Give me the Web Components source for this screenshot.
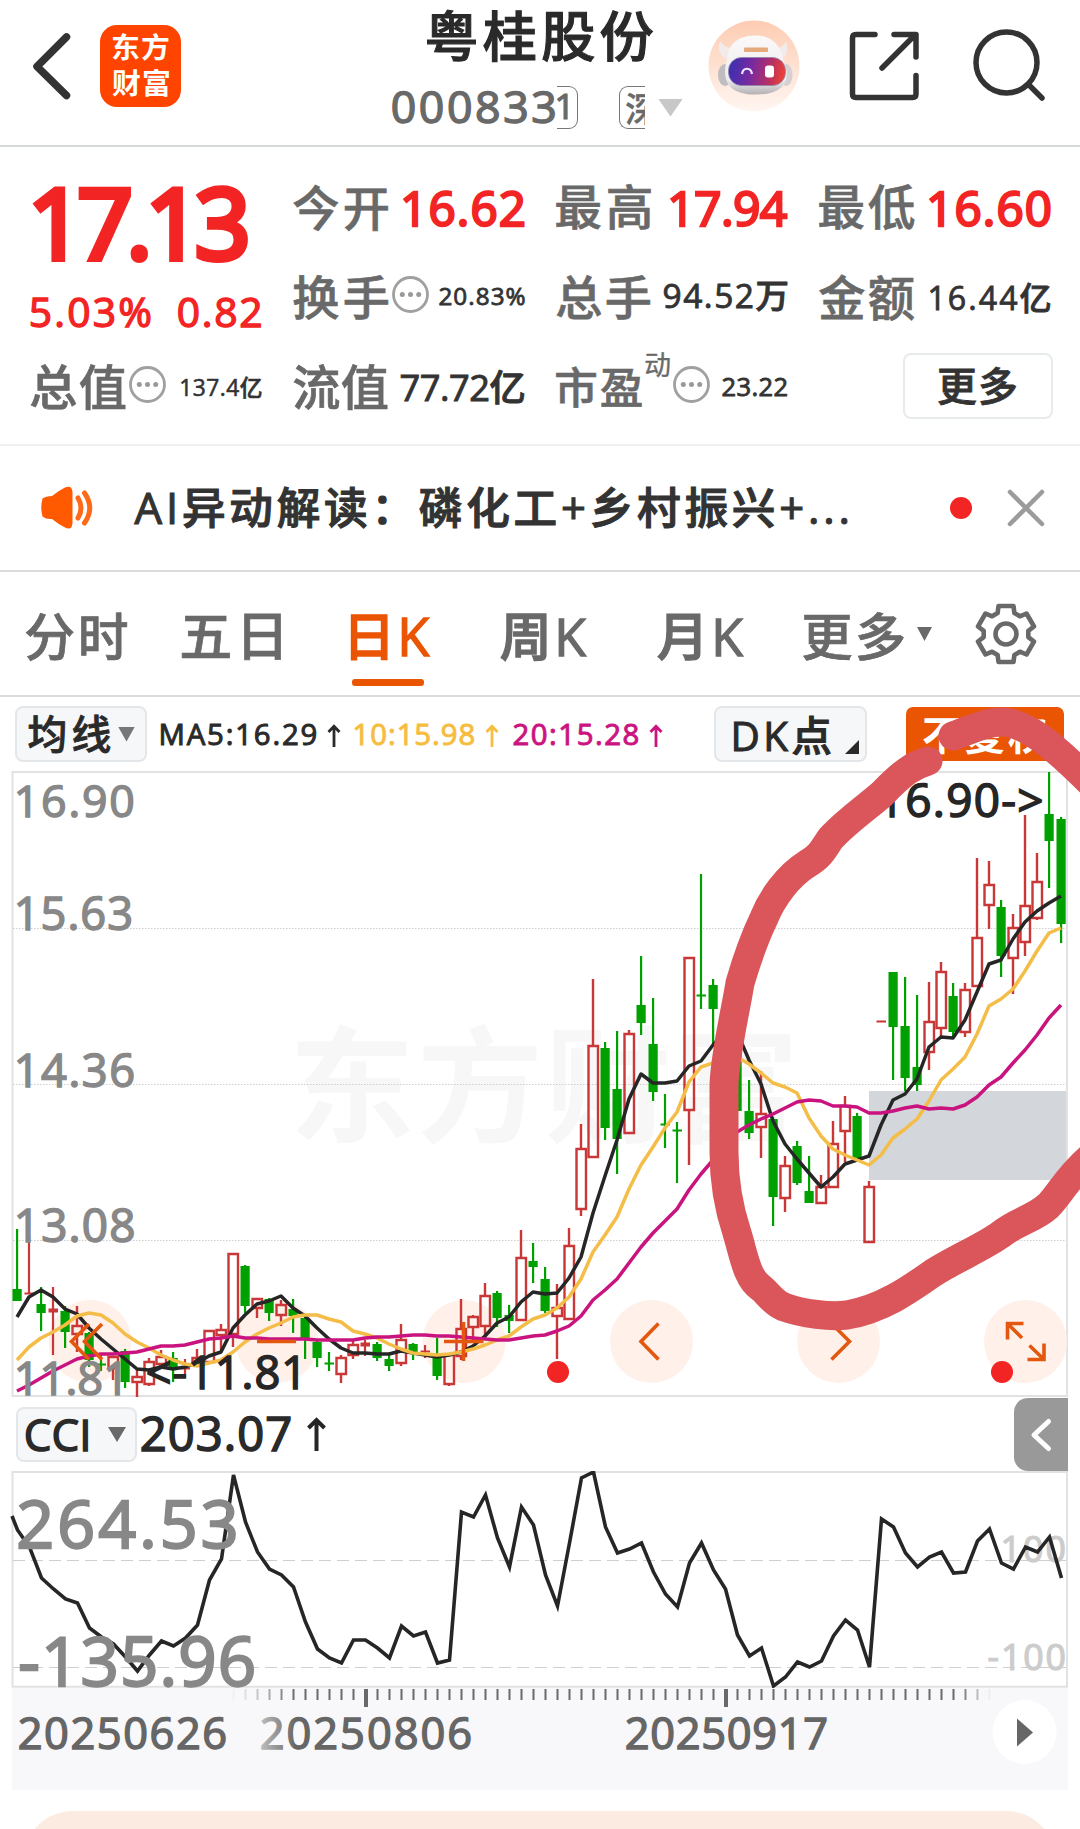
<!DOCTYPE html>
<html lang="zh-CN">
<head>
<meta charset="utf-8">
<title>粤桂股份 000833</title>
<style>
    body {
        margin: 0;
        width: 1080px;
        height: 1829px;
        overflow: hidden;
        background: #fff;
        color: #2a2a2a;
        font-family: "Open Sans", "Noto Sans CJK SC", sans-serif;
    }
</style>
</head>
<body>
<stock-page></stock-page>

<script>
const FONT = '"Open Sans", "Noto Sans CJK SC", sans-serif';
const measureCtx = document.createElement('canvas').getContext('2d');

// Extra outline in em: the Latin digits are lighter than the Chinese glyphs
function outlineFor(text, weight) {
    if (weight >= 700) return 0;
    if (!/[\u4e00-\u9fff]/.test(text)) return 0.034;
    return /[0-9A-Z]/.test(text) ? 0.026 : 0.014;
}

// Font size, tracking and offsets that make the ink of a text fill a w x h box
function fitInk(text, w, h, weight, heavy) {
    measureCtx.font = `${weight} 100px ${FONT}`;
    let m = measureCtx.measureText(text);
    const size = 100 * h / (m.actualBoundingBoxAscent + m.actualBoundingBoxDescent + 100 * heavy);
    const stroke = size * heavy;
    measureCtx.font = `${weight} ${size}px ${FONT}`;
    m = measureCtx.measureText(text);
    const ink = m.actualBoundingBoxLeft + m.actualBoundingBoxRight + stroke;
    const n = [...text].length;
    return {
        size,
        stroke,
        spacing: n > 1 ? (w - ink) / (n - 1) : 0,
        left: m.actualBoundingBoxLeft + stroke / 2,
        ascent: m.actualBoundingBoxAscent + stroke / 2,
        fontAscent: m.fontBoundingBoxAscent,
        fontDescent: m.fontBoundingBoxDescent,
    };
}

function svgText(text, x, y, w, h, color, weight = 500) {
    const f = fitInk(text, w, h, weight, outlineFor(text, weight));
    const safe = text.replace('<', '&lt;').replace('>', '&gt;');
    return `<text x="${x + f.left}" y="${y + f.ascent}" fill="${color}" stroke="${color}" stroke-width="${f.stroke}" font-size="${f.size}" font-weight="${weight}" style="letter-spacing:${f.spacing}px">${safe}</text>`;
}

function points(ys, x0 = 17, step = 12) {
    return ys.map((y, i) => `${x0 + i * step},${y}`).join(' ');
}

class BaseElement extends HTMLElement {
    connectedCallback() {
        if (this.shadowRoot) return;
        this.attachShadow({ mode: 'open' });
        this.shadowRoot.innerHTML = this.template();
    }
}

class FitText extends BaseElement {
    template() {
        const text = this.getAttribute('text');
        const w = +this.getAttribute('w');
        const h = +this.getAttribute('h');
        const weight = this.getAttribute('weight') || 500;
        const heavy = this.hasAttribute('heavy') ? +this.getAttribute('heavy') : outlineFor(text, weight);
        const f = fitInk(text, w, h, weight, heavy);
        const baseline = (h - f.fontAscent - f.fontDescent) / 2 + f.fontAscent;
        return `
            <style>
                :host { display: block; flex: none; width: ${w}px; height: ${h}px; }
                span {
                    display: block;
                    white-space: pre;
                    font: ${weight} ${f.size}px/${h}px ${FONT};
                    letter-spacing: ${f.spacing}px;
                    -webkit-text-stroke: ${f.stroke}px currentColor;
                    transform: translate(${f.left}px, ${f.ascent - baseline}px);
                }
            </style>
            <span>${text}</span>
        `;
    }
}

class TriangleMark extends BaseElement {
    template() {
        const w = this.getAttribute('w');
        const h = this.getAttribute('h');
        return `
            <style>
                :host { display: block; flex: none; width: ${w}px; height: ${h}px; background: currentColor; clip-path: polygon(0 0, 100% 0, 50% 100%); }
            </style>
        `;
    }
}

class MoreDots extends BaseElement {
    template() {
        return `
            <style>
                :host { display: block; flex: none; width: 37px; height: 37px; }
                svg { display: block; }
            </style>
            <svg width="37" height="37" viewBox="0 0 37 37">
                <circle cx="18.5" cy="18.5" r="17" fill="none" stroke="#a0a0a0" stroke-width="2.8"/>
                <g fill="#999"><circle cx="10.3" cy="18.5" r="2.5"/><circle cx="18.5" cy="18.5" r="2.5"/><circle cx="26.7" cy="18.5" r="2.5"/></g>
            </svg>
        `;
    }
}

class RobotAvatar extends BaseElement {
    template() {
        return `
            <style>
                :host { display: block; flex: none; width: 92px; height: 92px; }
                svg { display: block; }
            </style>
            <svg width="92" height="92" viewBox="0 0 92 92">
                <defs>
                    <linearGradient id="bg" x1="0" y1="0" x2="0" y2="1"><stop offset="0" stop-color="#fdccb2"/><stop offset="1" stop-color="#fff6f1"/></linearGradient>
                    <linearGradient id="visor" x1="0" y1="0" x2="1" y2="0.1"><stop offset="0" stop-color="#3330b4"/><stop offset="0.45" stop-color="#7b2a9e"/><stop offset="0.8" stop-color="#bb315f"/><stop offset="1" stop-color="#e8403a"/></linearGradient>
                    <linearGradient id="head" x1="0" y1="0" x2="0" y2="1"><stop offset="0" stop-color="#fbf9f9"/><stop offset="0.75" stop-color="#eeecee"/><stop offset="1" stop-color="#b4b0b5"/></linearGradient>
                </defs>
                <circle cx="46" cy="46" r="45.500" fill="url(#bg)"/>
                <path d="M12 21C9 30 12 37 20 39L29 29C21 29 15 26 12 21ZM78 21C81 30 79 37 72 39L64 29C71 29 76 26 78 21Z" fill="#f3ebea"/>
                <ellipse cx="17" cy="55" rx="7" ry="11" fill="#c0bcbf"/>
                <ellipse cx="78" cy="55" rx="6.500" ry="11" fill="#d5d0d3"/>
                <path d="M46 15.500C63 15 73 25 75 39C83 57 80 74.500 48 74.500C17 74.500 14 57 19 39C20 25 29 16 46 15.500Z" fill="url(#head)"/>
                <rect x="36" y="27.500" width="24" height="4.500" rx="1" fill="#e4aa7c"/>
                <rect x="20.500" y="37.500" width="57" height="28" rx="13" fill="url(#visor)" stroke="#8e86a8" stroke-width="0.800"/>
                <path d="M34 54C35 47 43 47 44 54" fill="none" stroke="#eee8ff" stroke-width="2.200"/>
                <rect x="57" y="45.500" width="9" height="12" rx="3" fill="#fff"/>
            </svg>
        `;
    }
}

class AppHeader extends BaseElement {
    template() {
        return `
            <style>
                :host { display: flex; align-items: flex-start; box-sizing: border-box; height: 147px; border-bottom: 2px solid #d5dad9; padding-left: 30px; }
                svg { display: block; flex: none; }
                .back { margin-top: 30px; }
                .logo {
                    display: flex; flex-direction: column; align-items: center; gap: 7px;
                    box-sizing: border-box; width: 81px; height: 82px; margin: 25px 0 0 28px; padding-top: 8px;
                    border-radius: 17px; background: #ff4400; color: #fff;
                }
                .name { margin: 10px 0 0 211px; width: 291px; }
                .name > fit-text { margin-left: 35px; }
                .code { display: flex; align-items: center; height: 43px; margin-top: 23px; color: #696969; }
                .tag { display: flex; align-items: center; box-sizing: border-box; height: 43px; border: 1px solid #777; overflow: hidden; }
                .tag.end { width: 21px; margin-left: 2px; border-left: 0; border-radius: 0 9px 9px 0; }
                .tag.start { width: 26px; margin-left: 41px; padding-left: 6px; border-right: 0; border-radius: 9px 0 0 9px; }
                triangle-mark { color: #c8c8c8; margin-left: 13px; }
                robot-avatar { margin: 20px 0 0 25px; }
                .share { margin: 29px 0 0 47px; }
                .search { margin: 26px 0 0 49px; }
            </style>
            <svg class="back" width="42" height="72" viewBox="0 0 42 72" fill="none" stroke="#333" stroke-width="7.500" stroke-linecap="round" stroke-linejoin="round"><path d="M36.500 7 7 36.500 36.500 65.500"/></svg>
            <div class="logo">
                <fit-text text="东方" w="57" h="28" weight="700"></fit-text>
                <fit-text text="财富" w="57" h="28" weight="700"></fit-text>
            </div>
            <div class="name">
                <fit-text text="粤桂股份" w="226" h="53" heavy="0.02"></fit-text>
                <div class="code">
                    <fit-text text="000833" w="163" h="35"></fit-text>
                    <div class="tag end"><fit-text text="1" w="12" h="27"></fit-text></div>
                    <div class="tag start"><fit-text text="深" w="33" h="32"></fit-text></div>
                    <triangle-mark w="25" h="18"></triangle-mark>
                </div>
            </div>
            <robot-avatar></robot-avatar>
            <svg class="share" width="76" height="74" viewBox="847 29 76 74" fill="none" stroke="#333" stroke-width="5.500" stroke-linecap="round" stroke-linejoin="round">
                <path d="M875 34.500H856Q852.500 34.500 852.500 38V94Q852.500 97.500 856 97.500H912.500Q916 97.500 916 94V75.500M894 34.500H916V57M914 36 882 68"/>
            </svg>
            <svg class="search" width="76" height="76" viewBox="972 26 76 76" fill="none" stroke="#333" stroke-width="5.500" stroke-linecap="round">
                <circle cx="1006.500" cy="62.500" r="30.500"/><path d="M1029 85 1042 98"/>
            </svg>
        `;
    }
}

class QuoteCell extends BaseElement {
    template() {
        return `
            <style>
                :host { display: flex; align-items: center; justify-content: space-between; height: 46px; }
                .label { display: flex; align-items: center; color: #696969; gap: 3px; }
            </style>
            <div class="label"><slot name="label"></slot></div>
            <slot></slot>
        `;
    }
}

class QuotePanel extends BaseElement {
    template() {
        return `
            <style>
                :host {
                    display: grid; grid-template-columns: repeat(4, 232px); grid-template-rows: 46px 46px 46px; column-gap: 31px; row-gap: 44px;
                    box-sizing: border-box; height: 299px; padding: 37px 0 0 30px; border-bottom: 2px solid #f0f0f0; color: #333;
                }
                .price { grid-row: 1 / span 2; color: #f32424; }
                .price > fit-text { margin: 1px 0 0 3px; }
                .change { display: flex; justify-content: space-between; margin-top: 34px; }
                .red { color: #f32424; }
                .low { transform: translateY(2px); }
                .sup { align-self: flex-start; margin-top: -14px; }
                more-dots { transform: translateY(-3px); }
                .more {
                    display: flex; align-items: center; justify-content: center; justify-self: end; align-self: center;
                    box-sizing: border-box; width: 150px; height: 66px; margin-right: -2px; margin-top: -3px;
                    border: 2px solid #e8ebeb; border-radius: 8px;
                }
                .more fit-text { margin: -1px 0 0 -2px; }
            </style>
            <div class="price">
                <fit-text text="17.13" w="215" h="78" heavy="0.062"></fit-text>
                <div class="change"><fit-text text="5.03%" w="121" h="32"></fit-text><fit-text text="0.82" w="84" h="32"></fit-text></div>
            </div>
            <quote-cell><fit-text slot="label" text="今开" w="95" h="46"></fit-text><fit-text class="red low" text="16.62" w="122" h="38" heavy="0.05"></fit-text></quote-cell>
            <quote-cell><fit-text slot="label" text="最高" w="95" h="46"></fit-text><fit-text class="red low" text="17.94" w="118" h="38" heavy="0.05"></fit-text></quote-cell>
            <quote-cell><fit-text slot="label" text="最低" w="96" h="46"></fit-text><fit-text class="red low" text="16.60" w="122" h="38" heavy="0.05"></fit-text></quote-cell>
            <quote-cell><fit-text slot="label" text="换手" w="96" h="45"></fit-text><more-dots slot="label"></more-dots><fit-text text="20.83%" w="86" h="19"></fit-text></quote-cell>
            <quote-cell><fit-text slot="label" text="总手" w="95" h="45"></fit-text><fit-text text="94.52万" w="125" h="30"></fit-text></quote-cell>
            <quote-cell><fit-text slot="label" text="金额" w="96" h="46"></fit-text><fit-text text="16.44亿" w="122" h="31"></fit-text></quote-cell>
            <quote-cell><fit-text slot="label" text="总值" w="96" h="46"></fit-text><more-dots slot="label"></more-dots><fit-text text="137.4亿" w="81" h="22"></fit-text></quote-cell>
            <quote-cell><fit-text slot="label" text="流值" w="95" h="46"></fit-text><fit-text text="77.72亿" w="125" h="35"></fit-text></quote-cell>
            <quote-cell><fit-text slot="label" text="市盈" w="86" h="42"></fit-text><fit-text class="sup" slot="label" text="动" w="25" h="25" weight="400"></fit-text><more-dots slot="label"></more-dots><fit-text style="margin:2px 0 0" text="23.22" w="66" h="20"></fit-text></quote-cell>
            <div class="more"><fit-text text="更多" w="79" h="39" heavy="0.02"></fit-text></div>
        `;
    }
}

class NoticeBar extends BaseElement {
    template() {
        return `
            <style>
                :host { display: flex; align-items: center; box-sizing: border-box; height: 126px; padding-left: 38px; border-bottom: 2px solid #dcdcdc; color: #333; }
                svg { display: block; flex: none; }
                fit-text { margin-left: 38px; }
                i { width: 22px; height: 22px; border-radius: 50%; background: #f32424; margin: 0 35px 0 102px; }
            </style>
            <svg width="58" height="50" viewBox="0 0 58 50">
                <path d="M4.500 15.500Q8 13 14 13Q20 8 27 4.500Q34 2 34.500 9V40Q34 48 27 44.500Q20 41 14 36Q8 36.500 4.500 33.500Q2 24.500 4.500 15.500Z" fill="#ff5a00"/>
                <path d="M40 15Q46 25 40 35M46.500 10Q57 25 46.500 40" fill="none" stroke="#ff6a1a" stroke-width="5" stroke-linecap="round"/>
            </svg>
            <fit-text text="AI异动解读：磷化工+乡村振兴+..." w="714" h="43"></fit-text>
            <i></i>
            <svg width="38" height="38" viewBox="0 0 38 38" stroke="#9b9b9b" stroke-width="4.500" stroke-linecap="round"><path d="M3 3 35 35M35 3 3 35"/></svg>
        `;
    }
}

class PeriodTabs extends BaseElement {
    // Outline of a six-tooth gear around (0, 0)
    gear() {
        const pts = [];
        for (let k = 0; k < 6; k++) {
            const a = k * 60 - 90;
            [[-22, 22.5], [-15, 29], [15, 29], [22, 22.5]].forEach(([d, r]) => {
                const t = (a + d) * Math.PI / 180;
                pts.push(`${(r * Math.cos(t)).toFixed(1)},${(r * Math.sin(t)).toFixed(1)}`);
            });
        }
        return pts.join(' ');
    }
    template() {
        return `
            <style>
                :host { display: flex; box-sizing: border-box; height: 125px; padding: 40px 0 0 25px; border-bottom: 2px solid #dcdcdc; color: #696969; }
                .active { color: #ea5504; }
                .active::after { content: ""; display: block; width: 72px; height: 7px; margin: 19px 0 0 2px; border-radius: 3px; background: #ea5504; }
                triangle-mark { margin: 15px 0 0 13px; }
                svg { display: block; flex: none; margin: -11px 0 0 42px; }
            </style>
            <fit-text text="分时" w="103" h="49"></fit-text>
            <fit-text style="margin:1px 0 0 53px" text="五日" w="100" h="47"></fit-text>
            <div class="active" style="margin:1px 0 0 69px"><fit-text text="日K" w="81" h="47"></fit-text></div>
            <fit-text style="margin:1px 0 0 69px" text="周K" w="87" h="48"></fit-text>
            <fit-text style="margin:1px 0 0 70px" text="月K" w="87" h="48"></fit-text>
            <fit-text style="margin:0 0 0 59px" text="更多" w="101" h="50"></fit-text>
            <triangle-mark w="15" h="14"></triangle-mark>
            <svg width="64" height="66" viewBox="-32 -33 64 66" fill="none" stroke="#696969" stroke-width="4.600" stroke-linejoin="round">
                <polygon points="${this.gear()}"/><circle r="10.500"/>
            </svg>
        `;
    }
}

class PickerBox extends BaseElement {
    template() {
        return `
            <style>
                :host { display: flex; align-items: center; flex: none; box-sizing: border-box; height: 56px; border: 2px solid #e4e7e9; border-radius: 8px; background: #f6f7f9; color: #2a2a2a; }
            </style>
            <slot></slot>
        `;
    }
}

class ChartLegend extends BaseElement {
    template() {
        const arrow = '<svg width="14" height="23" viewBox="0 0 14 23" fill="none" stroke="currentColor" stroke-width="2.8"><path d="M7 23V2M1.500 8 7 2.200 12.500 8"/></svg>';
        return `
            <style>
                :host { display: flex; align-items: flex-start; box-sizing: border-box; height: 74px; padding: 9px 0 0 15px; }
                svg { display: block; flex: none; }
                .ma { display: flex; gap: 10px; align-items: center; margin-top: 18px; }
                .grey { color: #777; }
                .on { display: flex; box-sizing: border-box; width: 158px; height: 54px; margin: 1px 0 0 39px; padding: 8px 17px; border-radius: 7px; background: #ea5504; color: #fff; }
                .corner { width: 14px; height: 14px; margin: 26px 0 0 14px; background: #2a2a2a; clip-path: polygon(100% 0, 100% 100%, 0 100%); }
            </style>
            <picker-box style="width:132px;padding-left:11px"><fit-text style="margin-top:-2px" text="均线" w="83" h="39" heavy="0.02"></fit-text><triangle-mark class="grey" style="margin-left:7px" w="17" h="15"></triangle-mark></picker-box>
            <div class="ma" style="margin-left:13px"><fit-text text="MA5:16.29" w="157" h="23"></fit-text>${arrow}</div>
            <div class="ma" style="margin-left:13px;color:#f6bd41"><fit-text text="10:15.98" w="121" h="23"></fit-text>${arrow}</div>
            <div class="ma" style="margin-left:14px;color:#cc1480"><fit-text text="20:15.28" w="126" h="23"></fit-text>${arrow}</div>
            <picker-box style="margin-left:51px;width:153px;padding-left:17px"><fit-text style="margin-top:-1px" text="DK点" w="98" h="39"></fit-text><div class="corner"></div></picker-box>
            <div class="on"><fit-text text="不复权" w="124" h="38" weight="700"></fit-text></div>
        `;
    }
}

// [up, high, bodyTop, bodyBottom, low], one per trading day
const CANDLES = [
    [0,1229,1289,1301,1301],[1,1236,1293,1294,1294],[0,1287,1304,1313,1331],[1,1287,1309,1313,1355],[0,1306,1311,1332,1348],
    [1,1306,1326,1334,1352],[0,1332,1333,1360,1367],[0,1355,1364,1366,1371],[1,1356,1357,1368,1380],[0,1349,1351,1382,1388],
    [1,1370,1377,1382,1397],[1,1358,1362,1384,1386],[1,1350,1357,1364,1368],[0,1352,1358,1368,1382],[1,1359,1368,1370,1378],
    [1,1349,1358,1363,1367],[1,1330,1331,1362,1362],[1,1324,1330,1335,1350],[1,1253,1254,1334,1347],[0,1265,1266,1306,1313],
    [1,1298,1299,1308,1318],[0,1298,1299,1313,1321],[1,1300,1305,1315,1326],[0,1299,1309,1316,1333],[0,1316,1318,1340,1359],
    [0,1340,1342,1358,1367],[0,1352,1363,1364,1371],[1,1355,1358,1374,1383],[1,1340,1345,1355,1359],[1,1340,1343,1347,1356],
    [0,1342,1344,1358,1361],[0,1354,1359,1366,1371],[1,1324,1340,1363,1366],[0,1343,1344,1353,1360],[1,1345,1351,1352,1358],
    [0,1338,1357,1376,1380],[1,1354,1355,1384,1386],[1,1299,1329,1356,1360],[1,1315,1317,1327,1343],[1,1283,1296,1326,1340],
    [0,1291,1293,1318,1327],[0,1305,1315,1321,1333],[1,1230,1258,1320,1320],[0,1243,1261,1267,1283],[0,1267,1279,1311,1313],
    [1,1284,1308,1316,1359],[1,1228,1246,1319,1319],[1,1124,1149,1209,1216],[1,979,1046,1157,1157],[0,1042,1048,1128,1140],
    [0,1031,1089,1139,1174],[1,1030,1034,1133,1133],[0,956,1005,1023,1035],[0,998,1044,1092,1101],[0,1094,1124,1125,1148],
    [0,1122,1130,1131,1183],[1,958,958,1110,1165],[0,874,995,996,1009],[0,979,985,1009,1047],[0,1020,1030,1050,1060],
    [0,1040,1050,1111,1111],[0,1080,1111,1133,1139],[1,1071,1114,1127,1158],[0,1117,1119,1197,1226],[1,1156,1166,1198,1212],
    [0,1141,1146,1183,1185],[0,1156,1191,1203,1203],[1,1175,1187,1203,1203],[1,1121,1144,1187,1187],[1,1096,1106,1131,1162],
    [0,1113,1116,1158,1162],[1,1181,1187,1242,1242],[1,1021,1021,1021,1021],[0,972,972,1027,1080],[0,977,1026,1078,1091],
    [0,995,1067,1085,1091],[1,982,1022,1052,1070],[1,962,972,1028,1038],[0,983,996,1032,1038],[1,983,990,1032,1037],
    [1,858,938,986,986],[1,861,885,905,929],[0,900,907,956,977],[1,914,928,958,994],[1,815,906,942,956],
    [1,853,882,918,920],[0,772,814,841,888],[0,817,819,924,943],
];
const MA5 = [1317,1297,1290,1297,1309,1314,1328,1339,1349,1359,1369,1370,1367,1369,1367,1363,1356,1352,1328,1315,1304,1301,1296,1308,1316,1328,1339,1348,1353,1353,1354,1354,1351,1353,1355,1357,1355,1352,1346,1336,1323,1317,1302,1292,1294,1293,1278,1257,1213,1176,1140,1099,1074,1083,1083,1081,1066,1061,1045,1032,1032,1060,1084,1121,1144,1159,1173,1187,1177,1164,1160,1156,1125,1100,1094,1079,1047,1037,1038,1020,992,964,960,939,922,911,903,896];
const MA10 = [1360,1347,1338,1332,1325,1316,1313,1315,1323,1334,1342,1348,1355,1360,1364,1366,1363,1360,1352,1342,1334,1328,1323,1317,1315,1315,1319,1322,1331,1334,1338,1344,1349,1353,1354,1355,1354,1352,1349,1345,1340,1336,1327,1319,1315,1308,1297,1279,1252,1235,1217,1189,1165,1147,1128,1112,1082,1067,1063,1060,1057,1064,1073,1083,1087,1093,1118,1136,1149,1155,1160,1165,1155,1138,1129,1119,1101,1080,1069,1057,1034,1006,999,989,971,951,933,928];
const MA20 = [1391,1385,1378,1371,1365,1359,1356,1354,1354,1353,1352,1349,1346,1346,1345,1342,1339,1338,1336,1338,1338,1339,1339,1339,1339,1340,1340,1340,1340,1338,1337,1337,1336,1335,1335,1336,1336,1337,1338,1339,1340,1340,1338,1336,1335,1331,1326,1316,1300,1290,1279,1263,1247,1233,1221,1209,1190,1174,1160,1144,1132,1125,1119,1114,1108,1102,1100,1101,1106,1106,1107,1113,1113,1111,1108,1106,1109,1108,1109,1105,1097,1085,1077,1063,1050,1035,1018,1005];
const CCI = [1530,1547,1578,1589,1599,1603,1628,1637,1644,1657,1671,1655,1641,1646,1638,1625,1580,1559,1475,1522,1552,1569,1575,1587,1622,1649,1658,1663,1640,1640,1648,1658,1626,1636,1632,1663,1660,1512,1517,1495,1538,1567,1507,1525,1575,1606,1543,1478,1472,1527,1553,1549,1543,1572,1594,1607,1563,1543,1570,1589,1635,1656,1648,1686,1677,1662,1667,1661,1636,1620,1630,1667,1519,1527,1553,1567,1557,1552,1573,1572,1541,1529,1563,1569,1547,1552,1537,1578];

class KlineChart extends BaseElement {
    candle([up, high, top, bottom, low], i) {
        const x = 17 + i * 12;
        if (bottom - top < 5) {
            const c = up ? '#c93736' : '#00a000';
            const t = Math.max(2, bottom - top);
            return `<path d="M${x} ${high}V${low}" stroke="${c}" stroke-width="2.2"/><rect x="${x - 4.5}" y="${top - 0.5}" width="9.5" height="${t}" fill="${c}"/>`;
        }
        if (!up) {
            return `<g fill="#00a000"><rect x="${x - 1}" y="${high}" width="2.2" height="${low - high}"/><rect x="${x - 4.5}" y="${top}" width="9.2" height="${bottom - top}"/></g>`;
        }
        return `<path d="M${x} ${high}V${top}M${x} ${bottom}V${low}M${x - 4.5} ${top}H${x + 5}V${bottom}H${x - 4.5}Z" fill="none" stroke="#c93736" stroke-width="2.4"/>`;
    }
    template() {
        const circles = [90, 277, 464, 651.5, 838.5, 1025.5].map(x => `<circle cx="${x}" cy="1341.5" r="41.5"/>`).join('');
        return `
            <style>
                :host { display: block; height: 626px; }
                svg { display: block; }
            </style>
            <svg width="1080" height="626" viewBox="0 771 1080 626" font-family='${FONT}'>
                ${svgText('东方财富', 296, 1023, 494, 122, '#f7f7f7', 700)}
                <rect x="869" y="1091" width="198" height="89" fill="#d3d6da"/>
                <path d="M12.500 772V1396M1067 772V1396M11.500 772H1068M11.500 1396H1068" fill="none" stroke="#e2e2e2" stroke-width="2"/>
                <path d="M13 928.500H1066M13 1084.500H1066M13 1240.500H1066" stroke="#cfcfcf" stroke-width="1" stroke-dasharray="1.500 1.500"/>
                <g fill="#fff0e9">${circles}</g>
                ${CANDLES.map((c, i) => this.candle(c, i)).join('')}
                <g fill="none" stroke-width="3.500" stroke-linejoin="round">
                    <polyline points="${points(MA5)}" stroke="#262626"/>
                    <polyline points="${points(MA10)}" stroke="#f4bd48"/>
                    <polyline points="${points(MA20)}" stroke="#c9147f"/>
                </g>
                ${svgText('16.90', 17, 784, 117, 35, '#888')}
                ${svgText('15.63', 17, 895, 115, 35, '#888')}
                ${svgText('14.36', 17, 1052, 117, 35, '#888')}
                ${svgText('13.08', 17, 1207, 117, 36, '#888')}
                ${svgText('11.81', 17, 1360, 103, 35, '#888')}
                ${svgText('<-11.81', 147, 1354, 151, 35, '#262626')}
                ${svgText('16.90->', 881, 782, 161, 36, '#262626')}
                <g fill="none" stroke="#e3570e" stroke-width="3.600">
                    <path d="M89 1324 71.500 1341.500 89 1359.500M102 1324 84.500 1341.500 102 1359.500"/>
                    <path d="M257 1341.500H296M444 1341.500H483.500M463.500 1322V1361"/>
                    <path d="M658.500 1323.500 641 1341.500 658.500 1359.500M831.500 1323.500 849.500 1341.500 831.500 1359.500"/>
                    <path d="M1023.500 1323.500H1007.500V1339.500M1007.500 1323.500 1022 1338M1027.500 1359.500H1044V1343.500M1044 1359.500 1029.500 1345.500"/>
                </g>
                <g fill="#f32424"><circle cx="558" cy="1372" r="11"/><circle cx="1002" cy="1372" r="11"/></g>
            </svg>
        `;
    }
}

class CciHeader extends BaseElement {
    template() {
        return `
            <style>
                :host { display: flex; align-items: flex-start; height: 74px; padding-left: 16px; }
                svg { display: block; flex: none; }
                .grey { color: #696969; }
                .side { display: flex; align-items: center; justify-content: center; width: 54px; height: 73px; margin: 1px 12px 0 auto; border-radius: 14px 0 0 14px; background: #999; }
            </style>
            <picker-box style="margin-top:10px;width:121px;height:55px;padding-left:7px"><fit-text text="CCI" w="63" h="34"></fit-text><triangle-mark class="grey" style="margin-left:20px" w="18" h="15"></triangle-mark></picker-box>
            <fit-text style="margin:19px 0 0 4px" text="203.07" w="150" h="37"></fit-text>
            <svg style="margin:20px 0 0 16px" width="19" height="34" viewBox="0 0 19 34" fill="none" stroke="#262626" stroke-width="4"><path d="M9.500 34V3M1.500 11 9.500 3 17.500 11"/></svg>
            <div class="side"><svg width="24" height="36" viewBox="0 0 24 36" fill="none" stroke="#fff" stroke-width="5" stroke-linecap="round" stroke-linejoin="round"><path d="M19.500 4.500 5 18 19.500 31.500"/></svg></div>
        `;
    }
}

class CciChart extends BaseElement {
    template() {
        return `
            <style>
                :host { display: block; height: 217px; }
                svg { display: block; }
            </style>
            <svg width="1080" height="217" viewBox="0 1471 1080 217" font-family='${FONT}'>
                <path d="M12.500 1472V1687M1067 1472V1687M11.500 1472H1068M11.500 1686.700H1068" fill="none" stroke="#e2e2e2" stroke-width="2"/>
                <path d="M13 1560.500H1066M13 1667.500H1066" stroke="#cfcfcf" stroke-width="1.200" stroke-dasharray="12 6"/>
                ${svgText('100', 1003, 1535, 62, 28, '#ccc')}
                ${svgText('-100', 988, 1643, 77, 28, '#ccc')}
                <polyline points="12,1516 ${points(CCI, 17.5)}" fill="none" stroke="#262626" stroke-width="3.600"/>
                ${svgText('264.53', 18, 1499, 218, 52, '#888')}
                ${svgText('-135.96', 19, 1635, 236, 52, '#888')}
            </svg>
        `;
    }
}

class DateAxis extends BaseElement {
    template() {
        let ticks = '';
        for (let i = 18; i <= 81; i++) ticks += `M${17.5 + i * 12} 1689V1700`;
        return `
            <style>
                :host { display: block; height: 102px; }
                svg { display: block; }
            </style>
            <svg width="1080" height="102" viewBox="0 1688 1080 102" font-family='${FONT}'>
                <defs>
                    <linearGradient id="l"><stop offset="0" stop-color="#f8f8fa"/><stop offset="0.300" stop-color="#f8f8fa" stop-opacity="0.800"/><stop offset="1" stop-color="#f8f8fa" stop-opacity="0"/></linearGradient>
                    <linearGradient id="r"><stop offset="0" stop-color="#f8f8fa" stop-opacity="0"/><stop offset="1" stop-color="#f8f8fa"/></linearGradient>
                </defs>
                <rect x="12" y="1688" width="1056" height="102" fill="#f8f8fa"/>
                <path d="${ticks}" stroke="#696969" stroke-width="2"/>
                <path d="M366 1689V1707M726 1689V1707" stroke="#696969" stroke-width="4"/>
                ${svgText('20250626', 19, 1716, 207, 34, '#666')}
                ${svgText('20250806', 261, 1716, 210, 34, '#666')}
                ${svgText('20250917', 626, 1716, 201, 34, '#666')}
                <rect x="228" y="1688" width="68" height="102" fill="url(#l)"/>
                <rect x="958" y="1688" width="34" height="102" fill="url(#r)"/>
                <circle cx="1024.500" cy="1732" r="32" fill="#fff"/>
                <path d="M1017 1718.500 1033 1732.500 1017 1746.500Z" fill="#666"/>
            </svg>
        `;
    }
}

// Freehand marker loop lying over the chart
class MarkerLoop extends BaseElement {
    template() {
        return `
            <style>
                :host { position: absolute; left: 0; top: 0; pointer-events: none; }
                svg { display: block; }
            </style>
            <svg width="1080" height="1829" fill="none" stroke="#db565b" stroke-width="29" stroke-linecap="round" stroke-linejoin="round">
                <path d="M953 736C970 730 988 721 1005 722C1027 725 1050 742 1092 784"/>
                <path d="M928 761C914 765 903 772 882 794C866 808 849 819 831 838C823 849 822 855 807 864C788 876 772 898 764 918C754 939 747 959 740 983C735 1014 724 1059 724 1087V1152C724 1185 731 1215 737 1233C744 1256 747 1278 760 1287C768 1293 772 1302 784 1307C803 1314 831 1317 847 1315C882 1309 909 1290 933 1273C955 1259 983 1247 1000 1235C1017 1221 1034 1219 1048 1206C1060 1194 1068 1176 1092 1156"/>
            </svg>
        `;
    }
}

class BottomPill extends BaseElement {
    template() {
        return `
            <style>
                :host { display: block; height: 18px; margin: 21px 24px 0 23px; overflow: hidden; }
                div { height: 100px; border-radius: 50px; background: #fcebe1; }
            </style>
            <div></div>
        `;
    }
}

class StockPage extends BaseElement {
    template() {
        return `
            <style>
                :host { display: block; position: relative; width: 1080px; height: 1829px; overflow: hidden; }
            </style>
            <app-header></app-header>
            <quote-panel></quote-panel>
            <notice-bar></notice-bar>
            <period-tabs></period-tabs>
            <chart-legend></chart-legend>
            <kline-chart></kline-chart>
            <cci-header></cci-header>
            <cci-chart></cci-chart>
            <date-axis></date-axis>
            <bottom-pill></bottom-pill>
            <marker-loop></marker-loop>
        `;
    }
}

customElements.define('fit-text', FitText);
customElements.define('triangle-mark', TriangleMark);
customElements.define('more-dots', MoreDots);
customElements.define('robot-avatar', RobotAvatar);
customElements.define('app-header', AppHeader);
customElements.define('quote-cell', QuoteCell);
customElements.define('quote-panel', QuotePanel);
customElements.define('notice-bar', NoticeBar);
customElements.define('period-tabs', PeriodTabs);
customElements.define('picker-box', PickerBox);
customElements.define('chart-legend', ChartLegend);
customElements.define('kline-chart', KlineChart);
customElements.define('cci-header', CciHeader);
customElements.define('cci-chart', CciChart);
customElements.define('date-axis', DateAxis);
customElements.define('marker-loop', MarkerLoop);
customElements.define('bottom-pill', BottomPill);
customElements.define('stock-page', StockPage);
</script>
</body>
</html>
